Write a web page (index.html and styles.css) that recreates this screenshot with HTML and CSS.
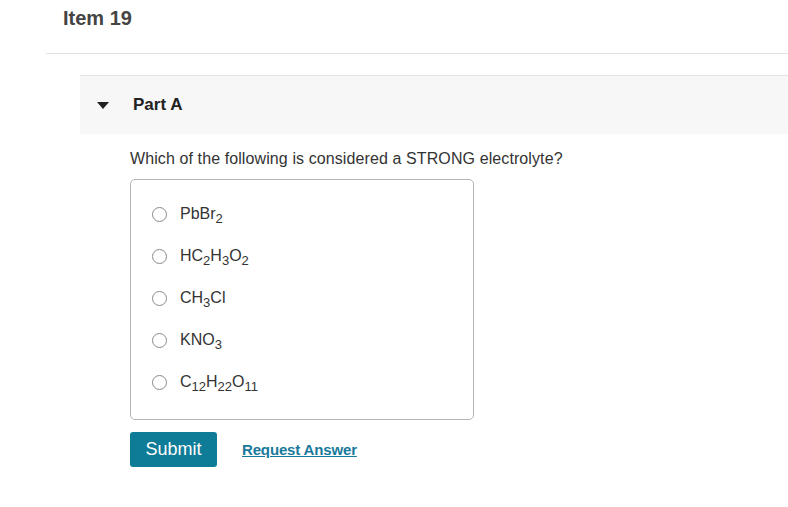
FILE: index.html
```html
<!DOCTYPE html>
<html>
<head>
<meta charset="utf-8">
<link rel="stylesheet" href="styles.css">
</head>
<body>
<div class="page">
  <div class="item-header"><h1 class="item-title">Item 19</h1></div>
  <div class="part">
    <div class="part-header">
      <svg class="caret" width="12" height="7" viewBox="0 0 12 7"><polygon points="0,0 12,0 6,7" fill="#222"/></svg>
      <span class="part-title">Part A</span>
    </div>
    <div class="part-body">
      <p class="question">Which of the following is considered a STRONG electrolyte?</p>
      <div class="options">
        <label class="option"><span class="radio"></span><span class="opt-text">PbBr<sub>2</sub></span></label>
        <label class="option"><span class="radio"></span><span class="opt-text">HC<sub>2</sub>H<sub>3</sub>O<sub>2</sub></span></label>
        <label class="option"><span class="radio"></span><span class="opt-text">CH<sub>3</sub>Cl</span></label>
        <label class="option"><span class="radio"></span><span class="opt-text">KNO<sub>3</sub></span></label>
        <label class="option"><span class="radio"></span><span class="opt-text">C<sub>12</sub>H<sub>22</sub>O<sub>11</sub></span></label>
      </div>
      <div class="actions">
        <button class="submit">Submit</button>
        <a class="request" href="#">Request Answer</a>
      </div>
    </div>
  </div>
</div>
</body>
</html>
```
FILE: styles.css
```css
* { box-sizing: border-box; }
html, body { margin: 0; padding: 0; background: #fff; }
body { font-family: "Liberation Sans", Arial, sans-serif; color: #333; }
.page { padding-left: 46px; }
.item-header {
  height: 54px;
  border-bottom: 1px solid #e2e2e2;
  padding-left: 17px;
  padding-top: 6px;
}
.item-title { margin: 0; font-size: 20px; font-weight: bold; color: #444; line-height: 24px; }
.part { margin-left: 34px; margin-top: 21px; }
.part-header {
  height: 59px;
  background: #f7f7f7;
  border-top: 1px solid #e2e2e2;
  display: flex;
  align-items: center;
  padding-left: 17px;
}
.caret { display: block; margin-top: 1px; }
.part-title { margin-left: 24px; font-size: 17px; font-weight: bold; color: #222; }
.part-body { padding-left: 50px; padding-top: 15px; }
.question { margin: 0; font-size: 16px; line-height: 20px; color: #333; letter-spacing: 0.1px; }
.options {
  margin-top: 10px;
  width: 344px;
  height: 241px;
  border: 1px solid #b5b5b5;
  border-radius: 5px;
  padding-top: 25px;
  padding-left: 21px;
  display: flex;
  flex-direction: column;
  gap: 24px;
}
.option { display: flex; align-items: center; height: 18px; font-size: 16px; color: #333; }
.radio {
  width: 15px; height: 15px;
  border: 1px solid #8a8a8a;
  border-radius: 50%;
  background: #fff;
  flex: none;
}
.opt-text { margin-left: 13px; line-height: 18px; }
.opt-text sub { font-size: 13px; vertical-align: -4px; line-height: 0; }
.actions { margin-top: 12px; display: flex; align-items: center; }
.submit {
  width: 87px; height: 35px;
  background: #0e7c96;
  color: #fff;
  border: none;
  border-radius: 3px;
  font-family: "Liberation Sans", Arial, sans-serif;
  font-size: 18px;
  padding: 0;
}
.request {
  margin-left: 25px;
  font-size: 15px;
  font-weight: bold;
  color: #19799a;
  text-decoration: underline;
  letter-spacing: -0.15px;
}
```
